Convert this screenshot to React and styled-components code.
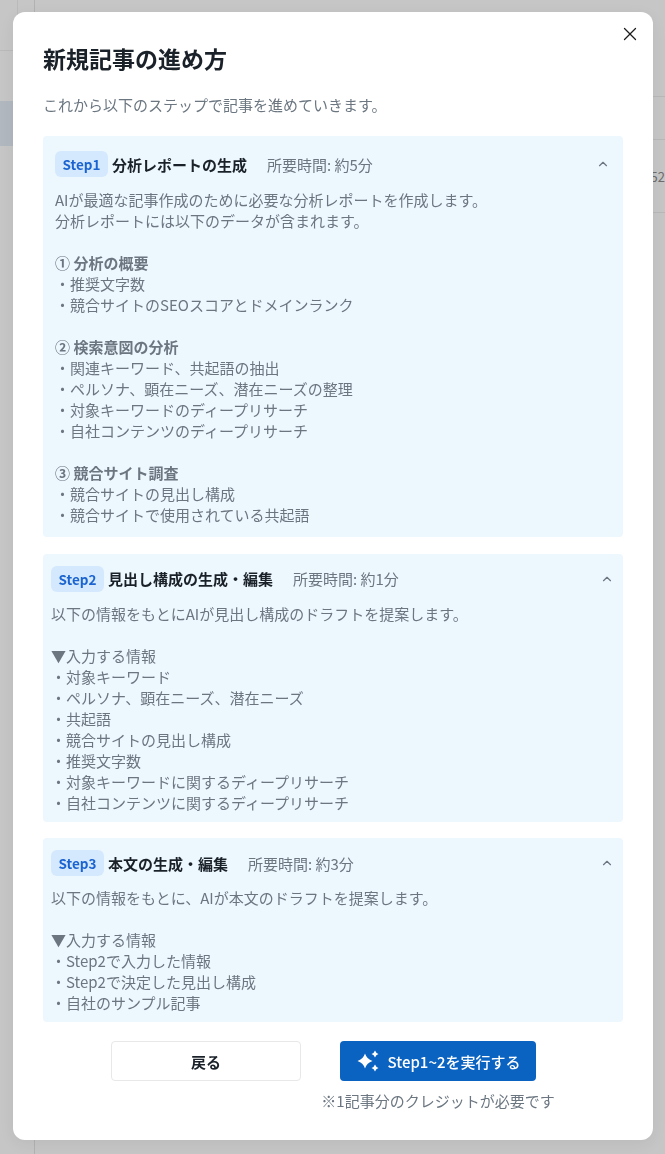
import React from 'react'
import styled, { createGlobalStyle } from 'styled-components'
import { X, ChevronUp } from 'lucide-react'

const GlobalStyle = createGlobalStyle`
  html, body { margin: 0; padding: 0; height: 100%; }
  body { font-family: "Noto Sans CJK JP", "Noto Sans", sans-serif; background: #c6c6c6; overflow: hidden; }
`

const Backdrop = styled.div`
  width: 665px;
  height: 1154px;
  background: #c6c6c6;
  display: flex;
`
const SideRail = styled.div`
  width: 34px;
  border-right: 1px solid #b2b2b2;
  display: flex;
  flex-direction: column;
`
const RailTop = styled.div`
  height: 50px;
  border-bottom: 1px solid #bababa;
`
const RailDivider = styled.div`
  width: 17px;
  height: 50px;
  border-right: 1px solid #bababa;
`
const RailActive = styled.div`
  height: 45px;
  margin-top: 50px;
  background: #b2b8bf;
`
const BackTable = styled.div`
  flex: 1;
  display: flex;
  flex-direction: column;
  align-items: flex-end;
  padding-top: 96px;
`
const BackRow = styled.div`
  width: 100%;
  height: ${p => p.$h}px;
  border-top: 1px solid #b8b8b8;
  display: flex;
  align-items: center;
  justify-content: flex-end;
  font-size: 13px;
  color: #6c6c6c;
  overflow: hidden;
`
const Modal = styled.div`
  position: fixed;
  left: 13px;
  top: 12px;
  width: 640px;
  height: 1128px;
  box-sizing: border-box;
  background: #fff;
  border-radius: 12px;
  padding: 30px 30px 0;
  box-shadow: 0 4px 16px rgba(0, 0, 0, 0.06);
`
const CloseButton = styled.button`
  position: absolute;
  top: 11px;
  right: 12px;
  width: 22px;
  height: 22px;
  padding: 0;
  border: none;
  background: none;
  color: #1c1c1c;
  display: flex;
  align-items: center;
  justify-content: center;
`
const Title = styled.h2`
  margin: 0;
  font-size: 23px;
  line-height: 32px;
  font-weight: 700;
  color: #1a2129;
`
const Lead = styled.p`
  margin: 20px 0 21px;
  font-size: 15px;
  line-height: 21px;
  color: #6b7680;
`
const StepList = styled.div`
  display: flex;
  flex-direction: column;
  gap: 16.5px;
`
const StepCard = styled.section`
  background: #edf7fe;
  border-radius: 4px;
  padding: ${p => p.$pad}px ${p => p.$side}px 0;
  height: ${p => p.$h}px;
  box-sizing: border-box;
`
const StepHead = styled.div`
  display: flex;
  align-items: center;
  height: 26px;
`
const Badge = styled.span`
  background: #d4e9fd;
  color: #1a63d0;
  border-radius: 6px;
  font-size: 13.5px;
  font-weight: 700;
  line-height: 26px;
  padding: 0 7.5px;
  margin-right: 4px;
`
const StepName = styled.span`
  font-size: 15px;
  font-weight: 700;
  color: #1a2129;
`
const StepTime = styled.span`
  margin-left: 20px;
  font-size: 15px;
  color: #6b7680;
`
const Chevron = styled.span`
  margin-left: auto;
  margin-right: 1px;
  display: flex;
  color: #6b7680;
`
const StepBody = styled.div`
  margin-top: ${p => p.$gap}px;
  font-size: 15px;
  line-height: 21px;
  color: #6b7680;
  white-space: pre-line;
`
const Strong = styled.b`
  font-weight: 700;
`
const Footer = styled.div`
  display: flex;
  margin-top: 19px;
  padding-left: 68px;
  gap: 39px;
`
const BackButton = styled.button`
  width: 190px;
  height: 40px;
  box-sizing: border-box;
  background: #fff;
  border: 1px solid #e8e8e8;
  border-radius: 4px;
  font: 700 15px "Noto Sans CJK JP", sans-serif;
  color: #1a2129;
`
const RunColumn = styled.div`
  width: 196px;
  display: flex;
  flex-direction: column;
  align-items: center;
`
const RunButton = styled.button`
  width: 196px;
  height: 40px;
  padding: 0;
  background: #0a62c1;
  border: none;
  border-radius: 4px;
  color: #fff;
  font: 500 15px "Noto Sans CJK JP", sans-serif;
  display: flex;
  align-items: center;
  justify-content: center;
  gap: 8px;
`
const Note = styled.p`
  margin: 9px 0 0;
  font-size: 15px;
  line-height: 21px;
  color: #6b7680;
  white-space: nowrap;
`

const Sparkles = () => (
  <svg width="24" height="24" viewBox="0 0 24 24" fill="#fff">
    <path d="M9 4.5Q10.8 10.2 16.5 12 10.8 13.8 9 19.5 7.2 13.8 1.5 12 7.2 10.2 9 4.5z" />
    <path d="M19 1.5Q19.9 4.1 22.5 5 19.9 5.9 19 8.5 18.1 5.9 15.5 5 18.1 4.1 19 1.5z" />
    <path d="M19 15.5Q19.9 18.1 22.5 19 19.9 19.9 19 22.5 18.1 19.9 15.5 19 18.1 18.1 19 15.5z" />
  </svg>
)

const Step = ({ no, name, time, h, pad, side, gap, children }) => (
  <StepCard $h={h} $pad={pad} $side={side}>
    <StepHead>
      <Badge>Step{no}</Badge>
      <StepName>{name}</StepName>
      <StepTime>所要時間: {time}</StepTime>
      <Chevron><ChevronUp size={14} /></Chevron>
    </StepHead>
    <StepBody $gap={gap}>{children}</StepBody>
  </StepCard>
)

const App = () => (
  <>
    <GlobalStyle />
    <Backdrop>
      <SideRail>
        <RailTop><RailDivider /></RailTop>
        <RailActive />
      </SideRail>
      <BackTable>
        <BackRow $h={42} />
        <BackRow $h={72}>52</BackRow>
        <BackRow $h={40} />
      </BackTable>
    </Backdrop>
    <Modal>
      <CloseButton aria-label="閉じる"><X size={22} strokeWidth={1.4} /></CloseButton>
      <Title>新規記事の進め方</Title>
      <Lead>これから以下のステップで記事を進めていきます。</Lead>
      <StepList>
        <Step no={1} name="分析レポートの生成" time="約5分" h={401} pad={15} side={12} gap={12}>
          {`AIが最適な記事作成のために必要な分析レポートを作成します。
分析レポートには以下のデータが含まれます。

`}<Strong>① 分析の概要</Strong>{`
・推奨文字数
・競合サイトのSEOスコアとドメインランク

`}<Strong>② 検索意図の分析</Strong>{`
・関連キーワード、共起語の抽出
・ペルソナ、顕在ニーズ、潜在ニーズの整理
・対象キーワードのディープリサーチ
・自社コンテンツのディープリサーチ

`}<Strong>③ 競合サイト調査</Strong>{`
・競合サイトの見出し構成
・競合サイトで使用されている共起語`}
        </Step>
        <Step no={2} name="見出し構成の生成・編集" time="約1分" h={268} pad={12} side={8} gap={11}>
          {`以下の情報をもとにAIが見出し構成のドラフトを提案します。

▼入力する情報
・対象キーワード
・ペルソナ、顕在ニーズ、潜在ニーズ
・共起語
・競合サイトの見出し構成
・推奨文字数
・対象キーワードに関するディープリサーチ
・自社コンテンツに関するディープリサーチ`}
        </Step>
        <Step no={3} name="本文の生成・編集" time="約3分" h={184} pad={12} side={8} gap={11}>
          {`以下の情報をもとに、AIが本文のドラフトを提案します。

▼入力する情報
・Step2で入力した情報
・Step2で決定した見出し構成
・自社のサンプル記事`}
        </Step>
      </StepList>
      <Footer>
        <BackButton>戻る</BackButton>
        <RunColumn>
          <RunButton><Sparkles />Step1~2を実行する</RunButton>
          <Note>※1記事分のクレジットが必要です</Note>
        </RunColumn>
      </Footer>
    </Modal>
  </>
)

export default App
